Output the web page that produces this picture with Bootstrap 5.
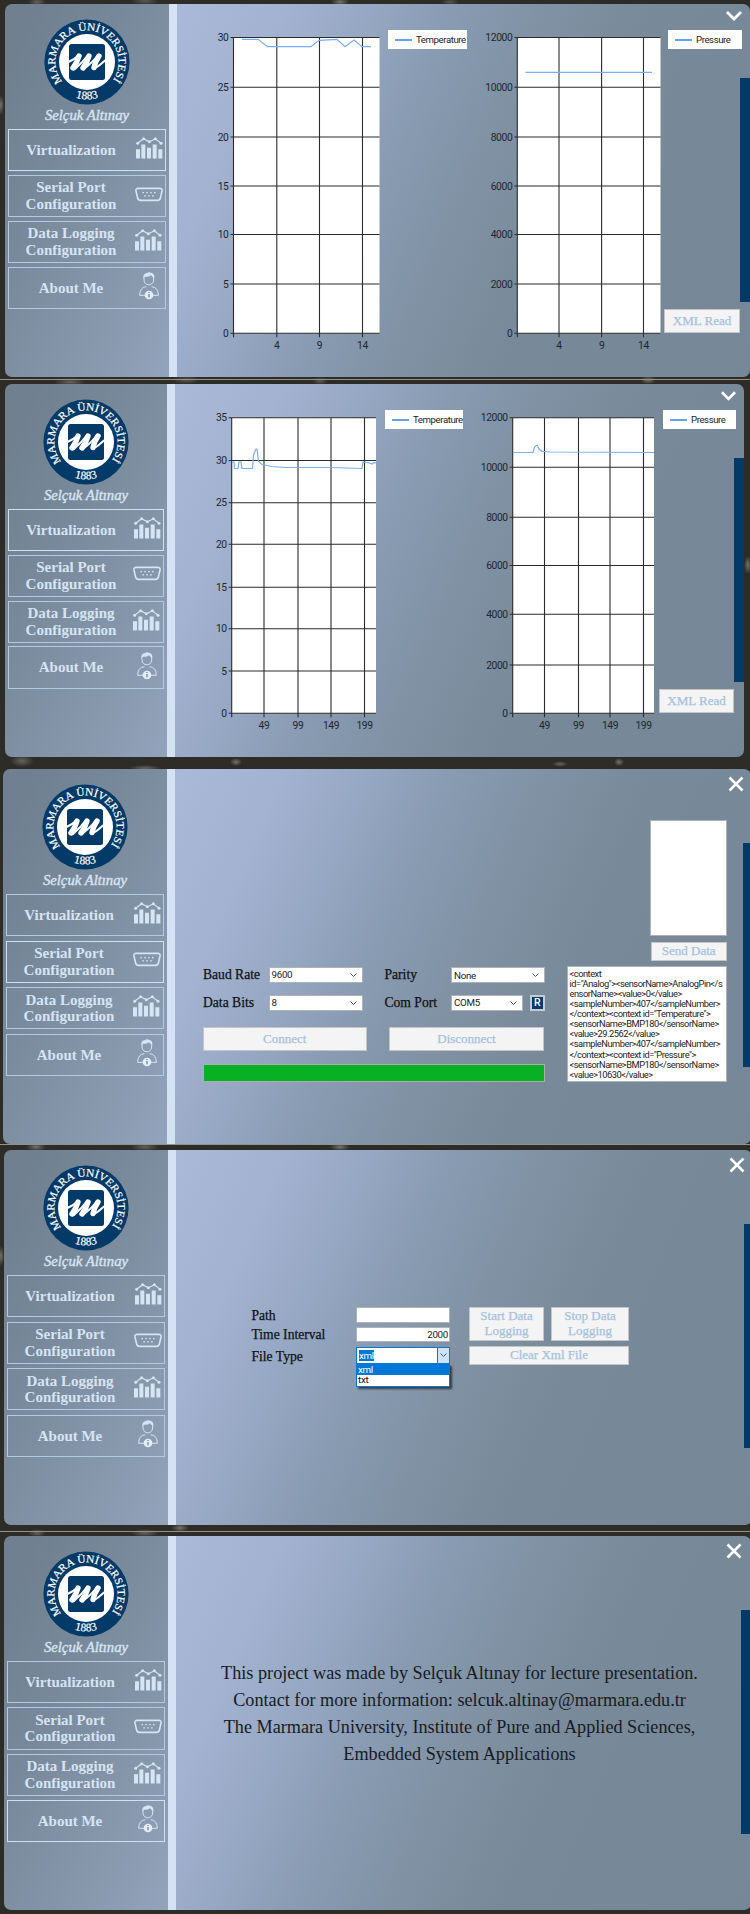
<!DOCTYPE html>
<html lang="en">
<head>
<meta charset="utf-8">
<meta name="viewport" content="width=device-width, initial-scale=1">
<title>Sensor Monitor</title>
<link rel="stylesheet" href="https://cdn.jsdelivr.net/npm/bootstrap@5.3.0/dist/css/bootstrap.min.css">
<style>
  :root { --navy:#033a68; --pale:#d6e4f4; --serif:"Liberation Serif",serif; --sans:Roboto,"Liberation Sans",sans-serif; }
  body { background-color:#2d2c27; font-family:var(--serif); color:#111; width:750px; height:1914px; overflow:hidden;
    background-image:
      radial-gradient(ellipse 9px 4px at 37px 2px,#66635a,transparent), radial-gradient(ellipse 14px 4px at 145px 1px,#5b5850,transparent),
      radial-gradient(ellipse 9px 4px at 340px 2px,#77736a,transparent), radial-gradient(ellipse 9px 3px at 450px 2px,#5b5850,transparent),
      radial-gradient(ellipse 16px 4px at 70px 382px,#66635a,transparent), radial-gradient(ellipse 14px 4px at 186px 380px,#5b5850,transparent),
      radial-gradient(ellipse 8px 4px at 320px 381px,#5b5850,transparent), radial-gradient(ellipse 8px 4px at 648px 380px,#77736a,transparent),
      radial-gradient(ellipse 12px 6px at 22px 761px,#66635a,transparent), radial-gradient(ellipse 16px 3px at 145px 768px,#66635a,transparent),
      radial-gradient(ellipse 6px 4px at 236px 762px,#77736a,transparent), radial-gradient(ellipse 8px 3px at 560px 764px,#66635a,transparent),
      radial-gradient(ellipse 5px 4px at 619px 762px,#77736a,transparent), radial-gradient(ellipse 4px 9px at 748px 565px,#77736a,transparent),
      radial-gradient(ellipse 10px 4px at 36px 1147px,#77736a,transparent), radial-gradient(ellipse 14px 4px at 145px 1147px,#66635a,transparent),
      radial-gradient(ellipse 10px 4px at 340px 1147px,#77736a,transparent), radial-gradient(ellipse 9px 4px at 37px 1533px,#66635a,transparent),
      radial-gradient(ellipse 14px 4px at 145px 1533px,#66635a,transparent), radial-gradient(ellipse 9px 4px at 180px 1528px,#77736a,transparent),
      radial-gradient(ellipse 3px 10px at 1px 105px,#77736a,transparent), radial-gradient(ellipse 3px 10px at 1px 1256px,#77736a,transparent);
  }
  .rule { height:1px; background:#92918d; }
  .shot { position:relative; border-radius:7px; overflow:hidden; margin-left:var(--l); width:var(--w); height:var(--h); }
  .s1 { --l:5px; --w:745px; --h:372.5px; --s:164px; --p:46px; margin-top:4px; }
  .s2 { --l:5px; --w:739px; --h:373px; --s:162px; --p:45.8px; margin-top:4px; }
  .s3 { --l:3px; --w:748px; --h:375px; --s:164px; --p:46.6px; margin-top:12px; }
  .s4 { --l:4px; --w:748px; --h:375px; --s:164px; --p:46.6px; margin-top:5px; }
  .s5 { --l:4px; --w:747px; --h:374px; --s:164px; --p:46.3px; margin-top:4px; }
  .side { width:var(--s); padding:15px 3px 0; background:linear-gradient(115deg,#708090 10%,#77889a 35%,#8c9db3 85%,#92a4bc); color:var(--pale); flex:none; }
  .stripe { width:8px; background:#d5e2f3; flex:none; }
  .pane { background:linear-gradient(113deg,#a9b9d7 0,#a2b2d0 15%,#98a9c5 25%,#8a9cb3 37%,#8092a4 50%,#788999 66%,#768797 100%); }
  .who { font-style:italic; font-size:14.7px; line-height:18px; height:24px; padding-top:1px; -webkit-text-stroke:.4px; }
  .menu-item { height:42.3px; margin-bottom:calc(var(--p) - 42.3px); border:1.4px solid #b4c9e2; font-weight:700; font-size:15px; line-height:16.8px; color:var(--pale); text-decoration:none; padding-right:2px; }
  .menu-item.active { border:1.8px solid #cfe0f2; }
  .menu-item span { width:123px; text-align:center; padding-left:1px; }
  .menu-item svg { margin-top:-4px; }
  .grip { position:absolute; background:var(--navy); top:var(--t); right:0; width:10px; height:224px; }
  .s3 .grip, .s4 .grip { width:8.5px; }
  .top { height:22px; padding:7px 0 0; }
  .legend-box { background:#fff; height:19px; font:9.6px/19px var(--sans); color:#222; white-space:nowrap; padding-left:7px; gap:4px; letter-spacing:-.4px; }
  .legend-box i { width:17px; height:2px; background:#62a3f2; flex:none; }
  .flat { background:#f4f4f4; border:1.5px solid #c5c5c3; color:#a4c1de; font-family:var(--serif); font-size:13px; line-height:14.4px; padding:0; border-radius:0; display:flex; align-items:center; justify-content:center; text-align:center; -webkit-text-stroke:.25px; }
  .box { background:#fff; border:1px solid #aeb2b6; border-radius:0; font:9.8px/13px var(--sans); letter-spacing:-.3px; color:#222; padding:0 5px 0 2px; display:flex; justify-content:space-between; align-items:center; }
  .lbl { font-size:13.6px; line-height:16px; color:#111; -webkit-text-stroke:.25px; white-space:nowrap; }
  .chart text { font:10.3px var(--sans); letter-spacing:-.4px; fill:#1d2730; }
  .chart .g { stroke:#2b2b2b; stroke-width:1.1; fill:none; }
  .chart .d { stroke:#77aef5; stroke-width:1.2; fill:none; }
  .serial { display:grid; grid-template-columns:65.5px 94px 22px 66.5px 94px; grid-template-rows:16.5px 16.5px; row-gap:11.6px; }
  .log { font:9.3px/10.13px var(--sans); letter-spacing:-.48px; color:#222; background:#fff; border:1px solid #aeb2b6; width:160px; height:116px; padding:1.5px 1.5px; white-space:pre; overflow:hidden; }
  .drop { position:absolute; top:16.5px; left:0; width:94px; z-index:2; border:1px solid #0078d7; background:#fff; font:9.8px/10.6px var(--sans); letter-spacing:-.3px; box-shadow:2px 2px 2px rgba(0,0,0,.6); }
  .note p { font-size:18.2px; line-height:27px; margin:0; white-space:nowrap; color:#161b22; }
</style>
</head>
<body>
<svg width="0" height="0" class="d-block position-absolute">
  <defs><path id="arcTop" d="M-24.200 20.300A31.600 31.600 0 1 1 24.200 20.300"/><path id="arcBot" d="M-20 31.500A37.300 37.300 0 0 0 20 31.500"/></defs>
  <symbol id="bars" viewBox="0 0 81 65"><g fill="#d6e4f4"><path d="M0 36h12v28H0zM16 22h12v42H16zM33 32h12v32H33zM50 22h12v42H50zM67 36h12v28H67z"/><circle cx="5" cy="18" r="4.5"/><circle cx="23" cy="4.5" r="4.5"/><circle cx="40" cy="14" r="4.5"/><circle cx="58" cy="5" r="4.5"/><circle cx="75" cy="18" r="4.5"/></g><path d="M5 18 23 4.500 40 14 58 5 75 18" fill="none" stroke="#d6e4f4" stroke-width="3.500"/></symbol>
  <symbol id="port" viewBox="0 0 86 44"><path d="M10 3H76Q84 3 83 11L78 33Q76 40 69 40H17Q10 40 8 33L3 11Q2 3 10 3Z" fill="none" stroke="#d6e4f4" stroke-width="5"/><g fill="#d6e4f4"><circle cx="25" cy="16" r="2.6"/><circle cx="37" cy="16" r="2.6"/><circle cx="49" cy="16" r="2.6"/><circle cx="61" cy="16" r="2.6"/><circle cx="31" cy="26" r="2.6"/><circle cx="43" cy="26" r="2.6"/><circle cx="55" cy="26" r="2.6"/></g></symbol>
  <symbol id="person" viewBox="0 0 60 84"><g fill="none" stroke="#d6e4f4" stroke-width="3"><path d="M15 14v10a14.500 14.500 0 0 0 29 0v-9"/><path d="M18 70H2Q2 46 22 44M42 70H58Q58 46 38 44"/></g><path d="M13 18Q12 4 24 3Q30-1 38 3Q47 5 46 18Q40 16 36 10Q28 16 18 14Z" fill="#d6e4f4"/><circle cx="30" cy="69" r="13" fill="#e2edf8"/><path d="M30 66v10M30 60v3" stroke="#778899" stroke-width="4"/></symbol>
  <symbol id="cross" viewBox="0 0 16 16"><path d="M1.500 1.500 14.500 14.500M14.500 1.500 1.500 14.500" stroke="#fff" stroke-width="2.600"/></symbol>
  <symbol id="down" viewBox="0 0 16 10"><path d="M1 1 8 8 15 1" stroke="#fff" stroke-width="2.800" fill="none"/></symbol>
  <symbol id="caret" viewBox="0 0 7 4"><path d="M.5.5 3.500 3.500 6.500.5" stroke="#555" fill="none"/></symbol>
</svg>

<section class="shot s1 d-flex">
  <nav class="side" data-active="0"></nav><div class="stripe"></div>
  <main class="pane flex-fill">
    <div class="top d-flex justify-content-end pe-2"><svg width="16" height="10"><use href="#down"/></svg></div>
    <div class="d-flex align-items-start" style="padding-left:29px">
      <svg class="chart" data-x="206" data-y="26" data-w="176" data-plot="233.5,379.5" data-ys="37.5,87.2,137,186,234.5,284,333.3" data-yl="30,25,20,15,10,5,0" data-xs="276.8,319.5,362.5" data-xl="4,9,14" data-line="242,39.300 258.500,39.500 267.500,46.700 311,46.700 319,40.300 337,39.300 345,46.700 354,40 362,46.700 371,46.700"></svg>
      <div class="legend-box d-flex align-items-center" style="width:79px;margin:4px 15px 0 6px"><i></i>Temperature</div>
      <svg class="chart" data-x="482" data-y="26" data-w="180" data-plot="517.3,660.5" data-ys="37.5,87.2,137,186,234.5,284,333.3" data-yl="12000,10000,8000,6000,4000,2000,0" data-xs="559,601.6,643.5" data-xl="4,9,14" data-line="525.500,72.300 652,72.300"></svg>
      <div class="d-flex flex-column" style="padding:4px 0 0 6px">
        <div class="legend-box d-flex align-items-center" style="width:74px"><i></i>Pressure</div>
        <button class="btn flat" style="width:76px;height:24px;margin:260px 0 0 -4px">XML Read</button>
      </div>
    </div>
  </main>
  <div class="grip" style="--t:73.500px"></div>
</section>
<div class="rule" style="margin-top:2.500px"></div>

<section class="shot s2 d-flex">
  <nav class="side" data-active="0"></nav><div class="stripe"></div>
  <main class="pane flex-fill">
    <div class="top d-flex justify-content-end pe-2"><svg width="15" height="10"><use href="#down"/></svg></div>
    <div class="d-flex align-items-start" style="padding-left:28px">
      <svg class="chart" data-x="203" data-y="406" data-w="176" data-plot="231.7,376" data-ys="417.7,460.5,502.7,544.3,587.3,628.8,671,713.3" data-yl="35,30,25,20,15,10,5,0" data-xs="264,298,331,364.5" data-xl="49,99,149,199" data-line="232,462 234,462 234.500,468.500 238,468.500 239,462 241,462 242,468.500 252.500,468.500 253.500,455 256,449 257,449 258.500,461.500 262,464.500 272,466.500 285,467.500 330,467.500 362,468.500 363,462 368,462.500 372,464 374,462.500 376,463"></svg>
      <div class="legend-box d-flex align-items-center" style="width:78px;margin:4px 14px 0 6px"><i></i>Temperature</div>
      <svg class="chart" data-x="477" data-y="406" data-w="179" data-plot="512.7,654" data-ys="417.7,467.3,517.3,565.5,614.3,665,713.3" data-yl="12000,10000,8000,6000,4000,2000,0" data-xs="544.5,578.5,610,643.5" data-xl="49,99,149,199" data-line="513,452.500 533,452.500 534.500,447 536,445.500 537.500,445.500 539,449 542,451.300 550,452 654,452.500"></svg>
      <div class="d-flex flex-column" style="padding:4px 0 0 7px">
        <div class="legend-box d-flex align-items-center" style="width:73px"><i></i>Pressure</div>
        <button class="btn flat" style="width:75px;height:24px;margin:260px 0 0 -4px">XML Read</button>
      </div>
    </div>
  </main>
  <div class="grip" style="--t:74px"></div>
</section>

<section class="shot s3 d-flex">
  <nav class="side" data-active="1"></nav><div class="stripe"></div>
  <main class="pane flex-fill">
    <div class="top d-flex justify-content-end" style="padding-right:7px"><svg width="16" height="16"><use href="#cross"/></svg></div>
    <div class="d-flex" style="padding:29px 0 0 28px">
      <div style="width:342px;margin:146.500px 22px 0 0">
        <div class="serial">
          <span class="lbl">Baud Rate</span><div class="box">9600<svg width="7" height="4"><use href="#caret"/></svg></div><i></i>
          <span class="lbl">Parity</span><div class="box" style="margin-top:.800px">None<svg width="7" height="4"><use href="#caret"/></svg></div>
          <span class="lbl">Data Bits</span><div class="box">8<svg width="7" height="4"><use href="#caret"/></svg></div><i></i>
          <span class="lbl">Com Port</span><div class="d-flex justify-content-between"><div class="box" style="width:71.500px">COM5<svg width="7" height="4"><use href="#caret"/></svg></div><div class="text-center text-white" style="width:15.500px;background:var(--navy);border:2px solid #c4ccd4;font:500 10.500px/12.500px var(--sans)">R</div></div>
        </div>
        <div class="d-flex justify-content-between" style="margin:16.400px 1px 0 0"><button class="btn flat" style="width:163.500px;height:23.500px">Connect</button><button class="btn flat" style="width:155px;height:23.500px">Disconnect</button></div>
        <div style="margin-top:13px;height:18.500px;background:#08b024;border:1.500px solid #aab0ac"></div>
      </div>
      <div class="d-flex flex-column align-items-end">
        <div class="box" style="width:77px;height:116px"></div>
        <button class="btn flat" style="width:76.500px;height:19px;margin:5.500px 0">Send Data</button>
        <div class="log"></div>
      </div>
    </div>
  </main>
  <div class="grip" style="--t:74px"></div>
</section>
<div class="rule"></div>

<section class="shot s4 d-flex">
  <nav class="side" data-active="-1"></nav><div class="stripe"></div>
  <main class="pane flex-fill">
    <div class="top d-flex justify-content-end" style="padding-right:7.500px"><svg width="16" height="16"><use href="#cross"/></svg></div>
    <div class="d-flex" style="padding:135px 0 0 75.500px">
      <div style="width:104.500px;padding-top:1px"><div class="lbl" style="height:18.800px">Path</div><div class="lbl" style="height:22px">Time Interval</div><div class="lbl">File Type</div></div>
      <div style="width:94px;margin-right:19px" class="position-relative">
        <div class="box" style="height:15.500px;margin-bottom:4px"></div>
        <div class="box justify-content-end" style="height:15px;margin-bottom:5.500px;padding-right:1px">2000</div>
        <div class="position-relative">
          <div class="box" style="height:16.500px;border-color:#0078d7;padding-right:0"><span class="text-white" style="background:#0078d7;line-height:11px">xml</span><span class="d-flex align-items-center justify-content-center" style="width:12.500px;height:14.500px;background:#cce4f7;border-left:1px solid #0078d7"><svg width="7" height="4"><use href="#caret"/></svg></span></div>
          <div class="drop"><div class="text-white" style="background:#0078d7;padding-left:1px">xml</div><div style="padding-left:1px">txt</div></div>
        </div>
      </div>
      <div style="width:160px">
        <div class="d-flex justify-content-between"><button class="btn flat" style="width:75px;height:33.500px">Start Data<br>Logging</button><button class="btn flat" style="width:78px;height:33.500px">Stop Data<br>Logging</button></div>
        <button class="btn flat w-100" style="height:19px;margin-top:5px">Clear Xml File</button>
      </div>
    </div>
  </main>
  <div class="grip" style="--t:74px"></div>
</section>
<div class="rule" style="margin-top:6px"></div>

<section class="shot s5 d-flex">
  <nav class="side" data-active="3"></nav><div class="stripe"></div>
  <main class="pane flex-fill">
    <div class="top d-flex justify-content-end" style="padding-right:9px"><svg width="16" height="16"><use href="#cross"/></svg></div>
    <div class="note text-center" style="padding:102px 8px 0 0">
      <p>This project was made by Selçuk Altınay for lecture presentation.</p>
      <p>Contact for more information: selcuk.altinay@marmara.edu.tr</p>
      <p>The Marmara University, Institute of Pure and Applied Sciences,</p>
      <p>Embedded System Applications</p>
    </div>
  </main>
  <div class="grip" style="--t:74px"></div>
</section>

<script src="https://cdn.jsdelivr.net/npm/bootstrap@5.3.0/dist/js/bootstrap.bundle.min.js"></script>
<script>
  // University seal shown at the top of every sidebar
  const seal = `<svg width="86" height="86" viewBox="-43 -43 86 86" class="d-block mx-auto">
    <circle r="42.600" fill="#033a68"/><circle r="28" fill="#fff"/><rect x="-18" y="-18" width="36" height="36" rx="2.500" fill="#033a68"/>
    <g fill="#fff" font-family="Liberation Serif,serif" stroke="#fff" stroke-width=".2"><text font-size="10.800"><textPath href="#arcTop" startOffset="1" textLength="139" lengthAdjust="spacingAndGlyphs">MARMARA ÜNİVERSİTESİ</textPath></text>
    <text font-size="11.500" text-anchor="middle"><textPath href="#arcBot" startOffset="50%">1883</textPath></text></g>
    <g stroke="#fff" fill="none" stroke-linecap="round" stroke-linejoin="round"><path stroke-width="2" d="M-18.500 0Q-12-3-8-7M-12 7Q-4 0 1-7M-3 7Q6 0 11-7M7 7Q12 4 18-1.500"/><path stroke-width="5.400" d="M-8-6Q-10 1-14 6M2-6Q0 1-4 6M12-6Q8 0 7 5.500"/></g></svg>`;

  // Navigation shared by every window
  const items = [['Virtualization','bars',27,22,0],['Serial Port<br>Configuration','port',28,15,0],['Data Logging<br>Configuration','bars',27,22,1],['About Me','person',20,28,4]];
  document.querySelectorAll('.side').forEach(n => {
    n.innerHTML = `<div class="text-center">${seal}<div class="who">Selçuk Altınay</div></div>` +
      items.map(([t, ic, w, h, m], i) => `<a class="menu-item d-flex align-items-center ${+n.dataset.active === i ? 'active' : ''}"><span>${t}</span><svg class="ms-auto flex-shrink-0" width="${w + m}" height="${h}" viewBox="0 0 ${w + m} ${h}"><use href="#${ic}" width="${w}" height="${h}"/></svg></a>`).join('');
  });

  // Line charts: grid, axis labels and series
  document.querySelectorAll('.chart').forEach(c => {
    const d = c.dataset, n = s => s.split(',').map(Number);
    const [x0, x1] = n(d.plot), ys = n(d.ys), xs = n(d.xs), yl = d.yl.split(','), xl = d.xl.split(',');
    const y0 = ys[0], y1 = ys[ys.length - 1];
    c.setAttribute('width', d.w); c.setAttribute('height', 326);
    c.setAttribute('viewBox', `${d.x} ${d.y} ${d.w} 326`);
    c.innerHTML = `<rect x="${x0}" y="${y0}" width="${x1 - x0}" height="${y1 - y0}" fill="#fff"/>` +
      `<path class="g" d="M${x0} ${y0}V${y1 + 4}${ys.map(y => `M${x0 - 3} ${y}H${x1}`).join('')}${xs.map(x => `M${x} ${y0}V${y1 + 4}`).join('')}"/>` +
      `<polyline class="d" points="${d.line}"/>` +
      ys.map((y, i) => `<text x="${x0 - 5}" y="${y + 3.5}" text-anchor="end">${yl[i]}</text>`).join('') +
      xs.map((x, i) => `<text x="${x}" y="${y1 + 15.5}" text-anchor="middle">${xl[i]}</text>`).join('');
  });

  // Received serial data
  document.querySelector('.log').textContent = ['<context','id="Analog"><sensorName>AnalogPin</s','ensorName><value>0</value>','<sampleNumber>407</sampleNumber>','</context><context id="Temperature">','<sensorName>BMP180</sensorName>','<value>29.2562</value>','<sampleNumber>407</sampleNumber>','</context><context id="Pressure">','<sensorName>BMP180</sensorName>','<value>10630</value>'].join('\n');
</script>
</body>
</html>
